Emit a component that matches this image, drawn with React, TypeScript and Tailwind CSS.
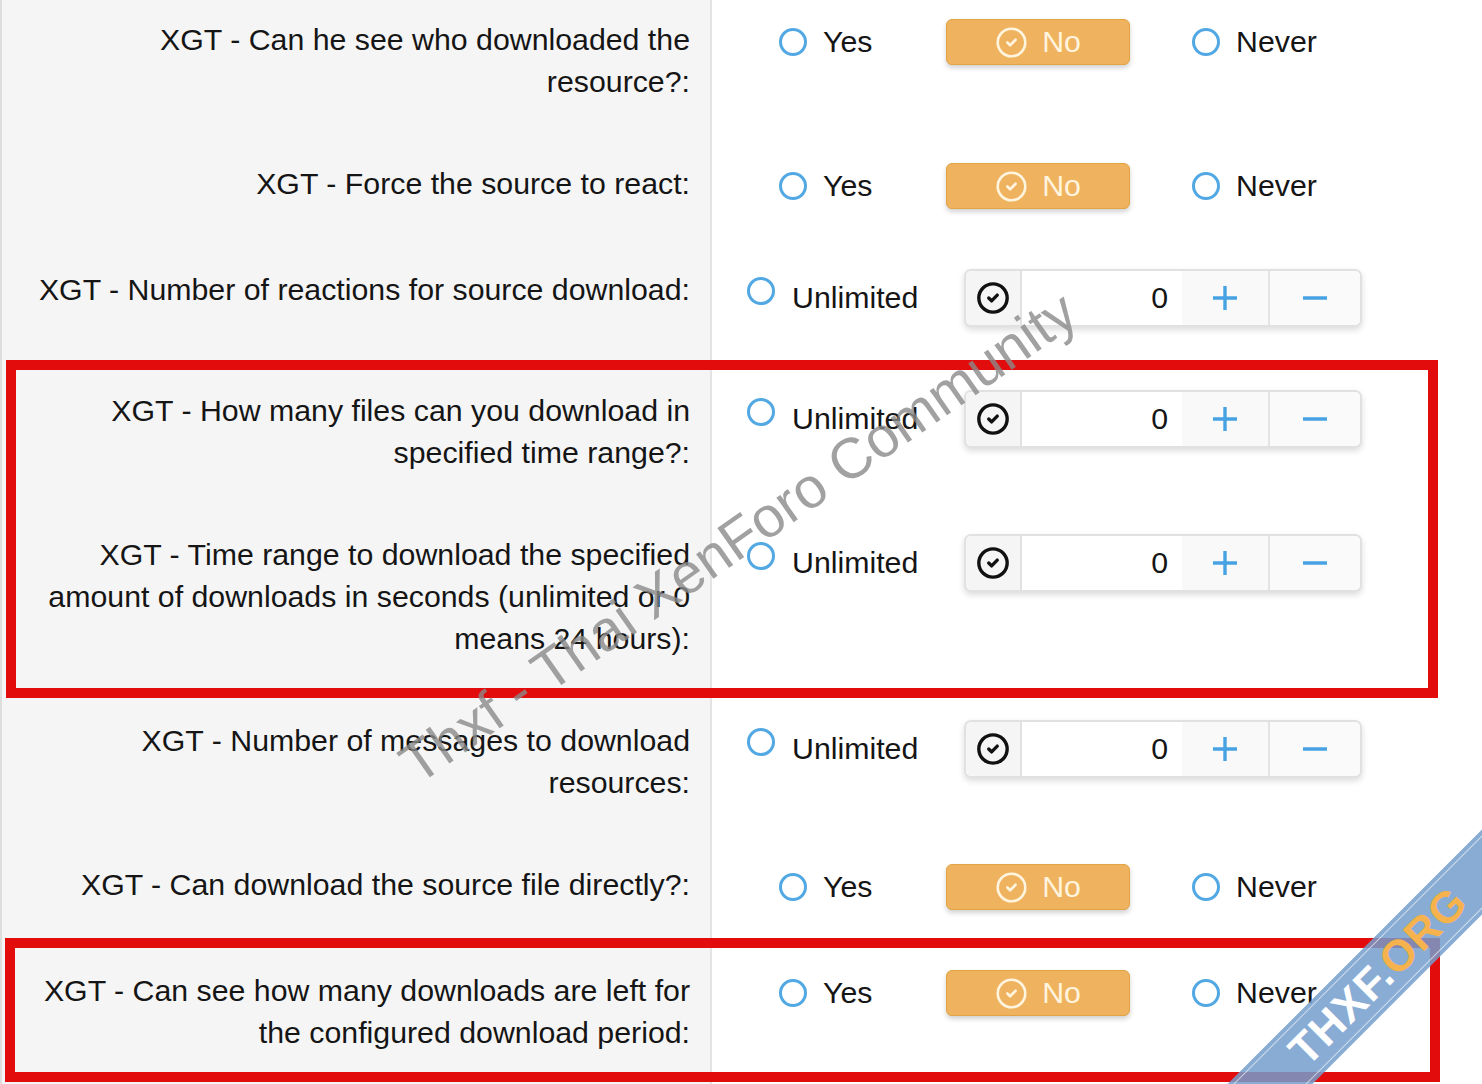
import { CircleCheck } from "lucide-react";

type RowKind = "choice" | "spinner";

interface FormRowProps {
  label: string;
  kind: RowKind;
  first?: boolean;
}

const rows: { label: string; kind: RowKind }[] = [
  { label: "XGT - Can he see who downloaded the resource?:", kind: "choice" },
  { label: "XGT - Force the source to react:", kind: "choice" },
  { label: "XGT - Number of reactions for source download:", kind: "spinner" },
  { label: "XGT - How many files can you download in specified time range?:", kind: "spinner" },
  {
    label:
      "XGT - Time range to download the specified amount of downloads in seconds (unlimited or 0 means 24 hours):",
    kind: "spinner",
  },
  { label: "XGT - Number of messages to download resources:", kind: "spinner" },
  { label: "XGT - Can download the source file directly?:", kind: "choice" },
  {
    label: "XGT - Can see how many downloads are left for the configured download period:",
    kind: "choice",
  },
];

function Radio() {
  return (
    <span className="w-[28px] h-[28px] rounded-full border-[3px] border-[#52a8e2] bg-white shrink-0" />
  );
}

function ChoiceControls() {
  return (
    <div className="flex items-center h-[46px]">
      <label className="ml-[32px] w-[167px] flex items-center gap-[16px]">
        <Radio />
        <span>Yes</span>
      </label>
      <button className="w-[184px] h-[46px] rounded-[6px] bg-[#efb25f] border border-[#e2a343] shadow-[0_3px_5px_rgba(0,0,0,0.18)] flex items-center justify-center gap-[14px] text-[#fff4de]">
        <CircleCheck className="w-[33px] h-[33px]" strokeWidth={1.9} />
        <span>No</span>
      </button>
      <label className="ml-[62px] flex items-center gap-[16px]">
        <Radio />
        <span>Never</span>
      </label>
    </div>
  );
}

function SpinnerControls({ extraGap }: { extraGap?: boolean }) {
  return (
    <div className={extraGap ? "flex items-center mb-[3px]" : "flex items-center"}>
      <label className="w-[217px] h-[58px] flex items-center gap-[17px]">
        <span className="mb-[14px] flex">
          <Radio />
        </span>
        <span>Unlimited</span>
      </label>
      <div className="h-[58px] w-[398px] flex rounded-[7px] border-2 border-[#e1e1e1] bg-white shadow-[0_3px_6px_rgba(0,0,0,0.14)] overflow-hidden">
        <div className="w-[56px] bg-[#f5f5f5] border-r-2 border-[#e1e1e1] flex items-center justify-center text-[#111]">
          <CircleCheck className="w-[34px] h-[34px]" strokeWidth={2.4} />
        </div>
        <div className="w-[160px] bg-white flex items-center justify-end pr-[14px]">0</div>
        <div className="w-[88px] bg-[#f9f9f9] border-r-2 border-[#e4e4e4] flex items-center justify-center">
          <svg width="26" height="26" viewBox="0 0 26 26">
            <path d="M13 1v24M1 13h24" stroke="#47a2e3" strokeWidth="3.4" />
          </svg>
        </div>
        <div className="flex-1 bg-[#fafafa] flex items-center justify-center">
          <svg width="26" height="26" viewBox="0 0 26 26">
            <path d="M1 13h24" stroke="#47a2e3" strokeWidth="3.4" />
          </svg>
        </div>
      </div>
    </div>
  );
}

function FormRow({ label, kind, first }: FormRowProps) {
  const pad = first ? "pt-[19px] pb-[30px]" : "py-[30px]";
  return (
    <div className="grid grid-cols-[712px_1fr]">
      <div
        className={`bg-[#f5f5f5] border-l-2 border-l-[#dddddd] border-r-2 border-r-[#e4e4e4] pl-[26px] pr-[20px] text-right ${pad}`}
      >
        {label}
      </div>
      <div className={`pl-[35px] ${pad}`}>
        {kind === "choice" ? <ChoiceControls /> : <SpinnerControls extraGap={label.includes("reactions")} />}
      </div>
    </div>
  );
}

export default function App() {
  return (
    <div
      className="relative w-[1482px] h-[1084px] overflow-hidden bg-white text-[30.3px] leading-[42px] text-[#151515]"
      style={{ fontFamily: '"Liberation Sans", Arial, sans-serif' }}
    >
      {rows.map((r, i) => (
        <FormRow key={r.label} label={r.label} kind={r.kind} first={i === 0} />
      ))}

      {/* annotation boxes */}
      <div className="absolute left-[6px] top-[360px] w-[1432px] h-[338px] border-[10px] border-[#e30c0c] pointer-events-none" />
      <div className="absolute left-[5px] top-[938px] w-[1435px] h-[144px] border-[10px] border-[#e30c0c] pointer-events-none" />

      {/* watermark */}
      <div className="absolute left-[738px] top-[537px] -translate-x-1/2 -translate-y-1/2 -rotate-[35deg] whitespace-nowrap text-[57px] leading-[70px] text-[#8a8a8a]/80 pointer-events-none">
        Thxf - Thai XenForo Community
      </div>

      {/* corner ribbon */}
      <div className="absolute left-[1378px] top-[976px] -translate-x-1/2 -translate-y-1/2 -rotate-45 w-[460px] h-[60px] bg-[#739dcd]/85 flex items-center justify-center pointer-events-none">
        <div className="absolute inset-x-0 top-[4px] bottom-[4px] border-y border-white/60" />
        <span className="relative font-bold text-[44px] leading-none tracking-[1px]">
          <span className="text-white">THXF.</span>
          <span className="text-[#f6b24c]">ORG</span>
        </span>
      </div>
    </div>
  );
}
